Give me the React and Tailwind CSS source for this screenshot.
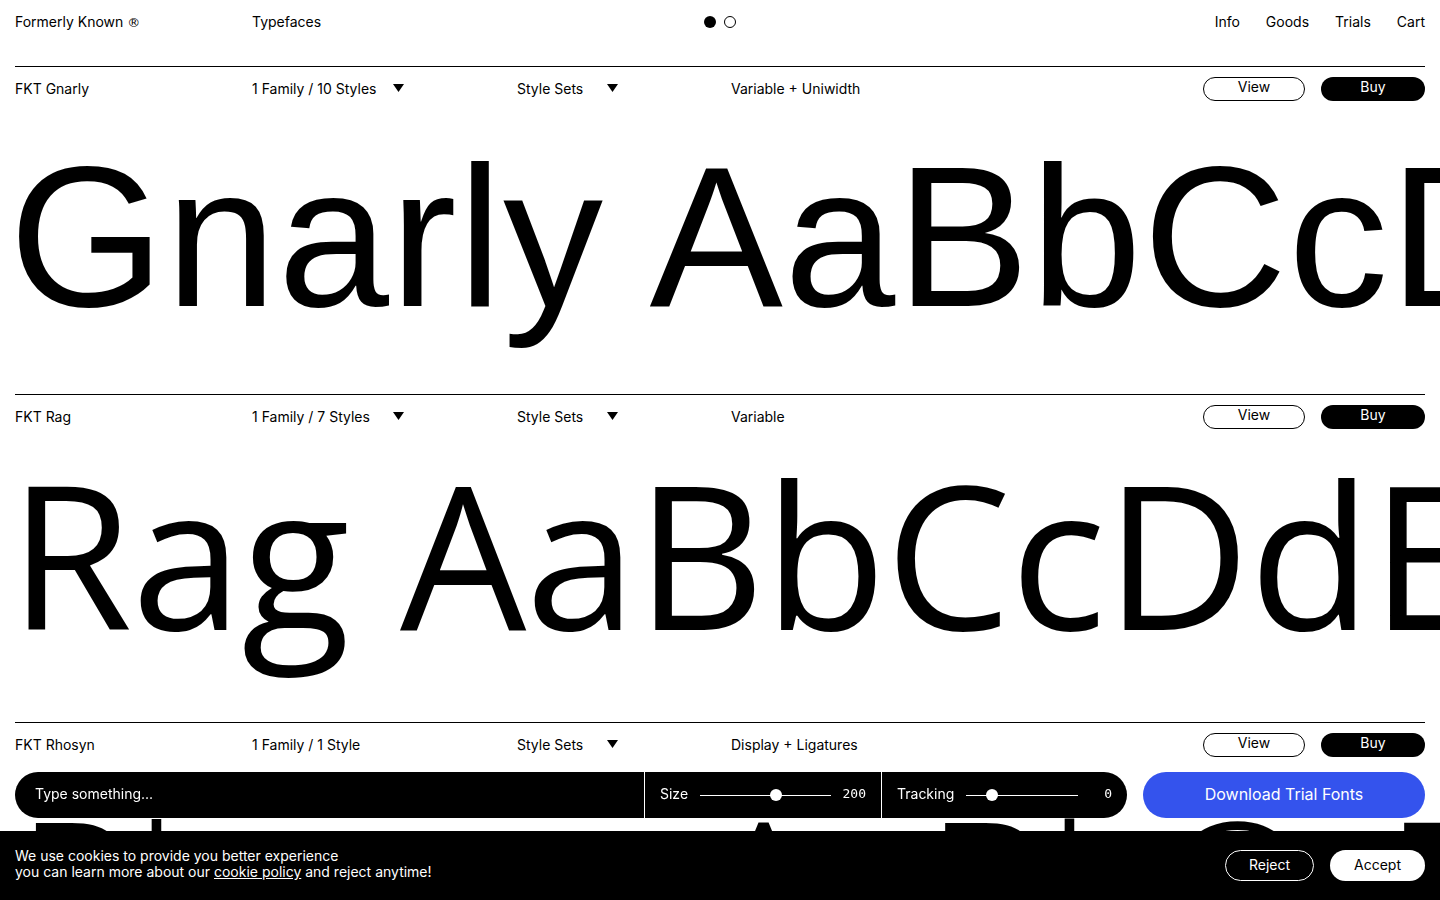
import React from 'react';

const families = [
  {
    name: 'FKT Gnarly',
    styles: '1 Family / 10 Styles',
    stylesMenu: true,
    tags: 'Variable + Uniwidth',
    sample: 'Gnarly AaBbCcDdEe',
    sampleClass: "font-['Liberation_Sans',Arial,sans-serif] font-normal pt-[26px] -ml-[6px] tracking-[1px]",
  },
  {
    name: 'FKT Rag',
    styles: '1 Family / 7 Styles',
    stylesMenu: true,
    tags: 'Variable',
    sample: 'Rag AaBbCcDdEe',
    sampleClass: "font-['Open_Sans',sans-serif] font-medium pt-[14px] -ml-[6px] tracking-[-1px]",
  },
  {
    name: 'FKT Rhosyn',
    styles: '1 Family / 1 Style',
    stylesMenu: false,
    tags: 'Display + Ligatures',
    sample: 'Rhosyn AaBbCcDd',
    sampleClass: "font-['Lato',sans-serif] font-light pt-[20px]",
  },
];

const Caret = () => (
  <svg width="11" height="8" viewBox="0 0 11 8" className="shrink-0">
    <path d="M0 0h11L5.5 8z" fill="currentColor" />
  </svg>
);

const FamilyRow = ({ family }) => (
  <section className="border-t border-black">
    <div className="flex items-center h-[44px] pb-[2px] text-[14px]">
      <div className="w-[237px]">{family.name}</div>
      <div className="w-[265px] flex items-center">
        <span className="w-[141px]">{family.styles}</span>
        {family.stylesMenu && <Caret />}
      </div>
      <div className="w-[214px] flex items-center">
        <span className="w-[90px]">Style Sets</span>
        <Caret />
      </div>
      <div className="flex-1">{family.tags}</div>
      <div className="flex items-center gap-4 mt-[1px]">
        <button className="w-[102px] h-[24px] rounded-full border border-black text-[14px] leading-none pb-[4px]">
          View
        </button>
        <button className="w-[104px] h-[24px] rounded-full bg-black text-white text-[14px] leading-none pb-[4px]">
          Buy
        </button>
      </div>
    </div>
    <div
      className={`h-[283px] whitespace-nowrap text-[200px] leading-[200px] ${family.sampleClass}`}
    >
      {family.sample}
    </div>
  </section>
);

const Slider = ({ label, value, track, thumb }) => (
  <div className="flex items-center h-full px-[15px] pb-[3px] gap-3">
    <span>{label}</span>
    <div className={`relative h-px bg-white mt-[3px] ${track}`}>
      <div
        className="absolute top-1/2 w-[12px] h-[12px] -mt-[6px] -ml-[6px] rounded-full bg-white"
        style={{ left: thumb }}
      />
    </div>
    <span className="flex-1 text-right font-['DejaVu_Sans_Mono',monospace] text-[13px]">{value}</span>
  </div>
);

export default function App() {
  return (
    <div className="min-h-screen overflow-hidden bg-white text-black font-['Inter',sans-serif]">
      <div className="px-[15px]">
        <header className="flex items-start h-[66px] pt-[11px] text-[14px]">
          <div className="w-[237px]">
            Formerly Known <span className="font-['DejaVu_Sans',sans-serif] text-[13px]">®</span>
          </div>
          <div className="w-[452px]">Typefaces</div>
          <div className="flex items-center gap-[8px] mt-[5px]">
            <span className="w-[12px] h-[12px] rounded-full bg-black" />
            <span className="w-[12px] h-[12px] rounded-full border border-black" />
          </div>
          <nav className="ml-auto flex gap-[26px]">
            <a>Info</a>
            <a>Goods</a>
            <a>Trials</a>
            <a>Cart</a>
          </nav>
        </header>
        {families.map((f) => (
          <FamilyRow key={f.name} family={f} />
        ))}
      </div>

      {/* type tester toolbar */}
      <div className="fixed left-[15px] right-[15px] bottom-[82px] flex gap-4 h-[46px] text-[14px]">
        <div className="flex flex-1 h-full rounded-full bg-black text-white overflow-hidden">
          <div className="w-[630px] flex items-center pl-[20px] pb-[3px] border-r border-white">
            Type something...
          </div>
          <div className="w-[237px] border-r border-white">
            <Slider label="Size" value="200" track="w-[136px]" thumb="76px" />
          </div>
          <div className="flex-1">
            <Slider label="Tracking" value="0" track="w-[112px]" thumb="26px" />
          </div>
        </div>
        <button className="w-[282px] h-full rounded-full bg-[#3453ed] text-white text-[16px] pb-[3px]">
          Download Trial Fonts
        </button>
      </div>

      {/* cookie notice */}
      <div className="fixed left-0 right-0 bottom-0 h-[69px] bg-black text-white flex items-center justify-between px-[15px] text-[14px]">
        <p className="leading-[16px] -mt-[3px]">
          We use cookies to provide you better experience
          <br />
          you can learn more about our <span className="underline">cookie policy</span> and reject anytime!
        </p>
        <div className="flex gap-4">
          <button className="w-[89px] h-[31px] rounded-full border border-white pb-[2px]">Reject</button>
          <button className="w-[95px] h-[31px] rounded-full bg-white text-black pb-[2px]">Accept</button>
        </div>
      </div>
    </div>
  );
}
